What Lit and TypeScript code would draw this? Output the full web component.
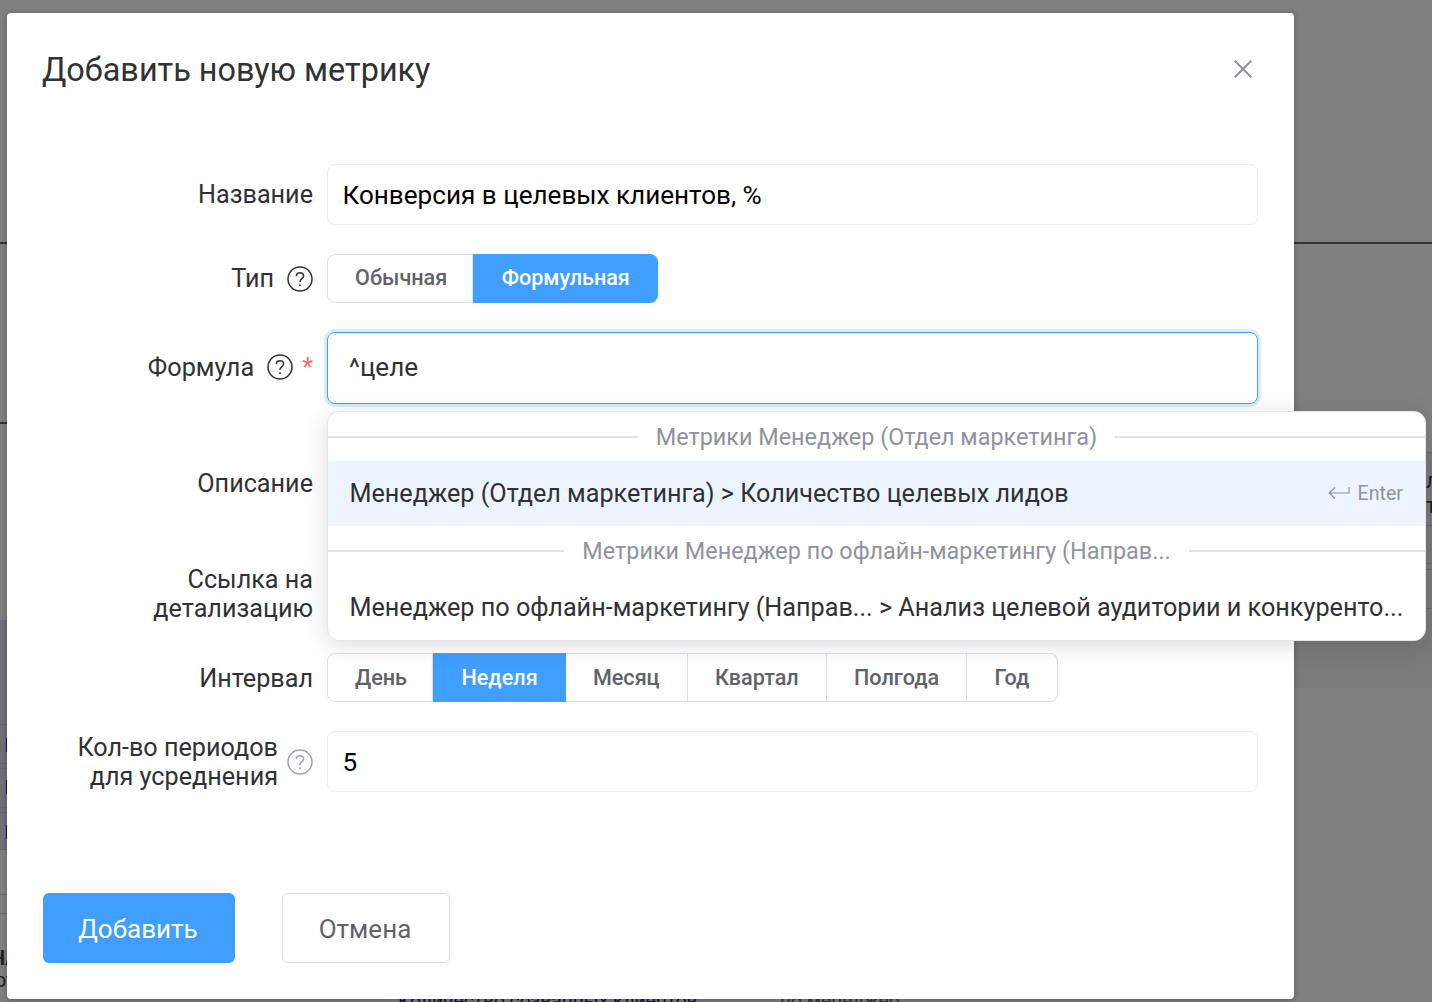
import { LitElement, html, css } from 'lit';
import { customElement } from 'lit/decorators.js';

const helpIcon = (cls = '') => html`
  <svg class="help ${cls}" viewBox="0 0 26 26" width="26" height="26" fill="none">
    <circle cx="13" cy="13" r="12" stroke="currentColor" stroke-width="1.5"></circle>
    <path d="M9.4 10.2c0-2.1 1.6-3.4 3.6-3.4s3.6 1.3 3.6 3.2c0 1.5-.9 2.2-1.9 2.9-1 .7-1.7 1.2-1.7 2.5v.6" stroke="currentColor" stroke-width="1.5"></path>
    <circle cx="13" cy="19.2" r="1" fill="currentColor"></circle>
  </svg>
`;

// faint rows of the page behind the backdrop, only their edges show
const leftRules = [724, 763, 768, 807, 812, 849, 894, 913];
const rightRules = [452, 525, 563, 569, 608];

@customElement('app-root')
export class AppRoot extends LitElement {
  static styles = css`
    :host {
      display: block;
      position: relative;
      height: 1002px;
      overflow: hidden;
      background: #808080;
      font-family: Roboto, 'Liberation Sans', sans-serif;
      color: #303133;
    }
    .bg {
      position: absolute;
    }
    .line-a {
      left: 0;
      right: 0;
      top: 242px;
      height: 2px;
      background: #333;
    }
    .line-b {
      left: 0;
      width: 8px;
      top: 422px;
      height: 2px;
      background: #333;
    }
    .band-left {
      left: 0;
      width: 8px;
      top: 620px;
      height: 229px;
      background: #707278;
    }
    .band-right {
      left: 1290px;
      right: 0;
      top: 452px;
      height: 236px;
      background: #7a7a7b;
    }
    .rule {
      height: 1px;
      background: #696a6e;
    }
    .rule.left {
      left: 0;
      width: 8px;
    }
    .rule.right {
      left: 1290px;
      right: 0;
    }
    .mark {
      left: 6px;
      width: 2px;
      height: 14px;
      background: #0a0a8c;
    }
    .mark-1 {
      top: 738px;
    }
    .mark-2 {
      top: 780px;
    }
    .mark-3 {
      top: 825px;
    }
    .bottom-text {
      top: 989px;
      font-size: 19.2px;
      line-height: 24px;
      white-space: nowrap;
    }
    .bottom-a {
      left: 398px;
      color: #0a0a70;
    }
    .bottom-b {
      left: 780px;
      color: #333;
    }
    .edge {
      font-size: 20px;
      line-height: 20px;
      color: #222;
      white-space: nowrap;
    }
    .edge-a {
      left: -9px;
      top: 948px;
      font-weight: 700;
    }
    .edge-b {
      left: -5px;
      top: 970px;
    }
    .edge-c {
      left: 1426px;
      top: 471px;
      font-size: 22px;
    }
    .edge-d {
      left: 1426px;
      top: 496px;
      font-size: 22px;
    }
    .modal {
      position: relative;
      box-sizing: border-box;
      width: 1287px;
      height: 986px;
      margin-left: 7px;
      top: 13px;
      background: #fff;
      border-radius: 4px;
      box-shadow: 0 1px 6px rgba(0, 0, 0, 0.3);
    }
    .head {
      display: flex;
      justify-content: space-between;
      align-items: flex-start;
      height: 151px;
      box-sizing: border-box;
      padding: 36px 42px 0 35px;
    }
    h1 {
      margin: 0;
      font-size: 32.4px;
      line-height: 42px;
      font-weight: 400;
      color: #303133;
    }
    .close {
      margin-top: 11px;
      color: #909399;
    }
    .form {
      display: flex;
      flex-direction: column;
      gap: 29px;
    }
    .row {
      display: grid;
      grid-template-columns: 306px 931px;
      column-gap: 14px;
    }
    .label {
      display: flex;
      justify-content: flex-end;
      align-items: center;
      gap: 13px;
      font-size: 25.2px;
      line-height: 29px;
      text-align: right;
      color: #303133;
    }
    .label.tight {
      gap: 9px;
    }
    .label.top {
      align-items: flex-start;
      padding-top: 36px;
    }
    .label.lift {
      padding-bottom: 2px;
    }
    .label.drop {
      padding-top: 2px;
    }
    .help {
      flex: none;
      color: #303133;
    }
    .help.muted {
      color: #9aa7ad;
    }
    .star {
      color: #f56c6c;
      margin-left: -4px;
    }
    .input {
      box-sizing: border-box;
      display: flex;
      align-items: center;
      height: 61px;
      padding: 0 14.5px;
      border: 1px solid #ebeef5;
      border-radius: 8px;
      font-size: 26.1px;
      color: #000;
    }
    .area {
      height: 101px;
    }
    .field {
      position: relative;
    }
    .input.focus {
      height: 72px;
      padding: 0 0 2px 21px;
      border: 1px solid #409eff;
      box-shadow: 0 0 0 3px #d9ebff;
      color: #303133;
    }
    .seg {
      display: inline-flex;
      height: 49px;
      vertical-align: top;
    }
    .seg span {
      box-sizing: border-box;
      display: flex;
      align-items: center;
      padding: 0 27.3px 0 27px;
      border: 1px solid #dcdfe6;
      border-left: 0;
      font-size: 21.6px;
      font-weight: 500;
      color: #606266;
    }
    .seg span:first-child {
      padding: 0 25px 0 27px;
      border-left: 1px solid #dcdfe6;
      border-radius: 8px 0 0 8px;
    }
    .seg span:last-child {
      border-radius: 0 8px 8px 0;
    }
    .seg span.on {
      padding-left: 28.5px;
      background: #409eff;
      border-color: #409eff;
      color: #fff;
    }
    .seg.up span {
      padding-bottom: 2px;
    }
    .menu {
      position: absolute;
      top: 79px;
      left: 0;
      width: 1099px;
      box-sizing: border-box;
      border: 1px solid #e4e7ed;
      border-radius: 12px;
      background: #fff;
      box-shadow: 0 4px 24px rgba(0, 0, 0, 0.14);
      overflow: hidden;
      z-index: 2;
    }
    .group {
      box-sizing: border-box;
      display: flex;
      align-items: center;
      gap: 18px;
      height: 50px;
      font-size: 23.4px;
      color: #909399;
      white-space: nowrap;
    }
    .group.first {
      height: 49px;
      padding-top: 1px;
    }
    .group::before,
    .group::after {
      content: '';
      flex: 1;
      height: 2px;
      background: #e0e2e8;
    }
    .item {
      box-sizing: border-box;
      display: flex;
      justify-content: space-between;
      align-items: center;
      height: 65px;
      padding: 0 22px 1px 21.5px;
      font-size: 25.2px;
      color: #303133;
      white-space: nowrap;
    }
    .item.last {
      height: 64px;
    }
    .item.active {
      background: #ecf5ff;
    }
    .enter {
      display: flex;
      align-items: center;
      gap: 8px;
      font-size: 19.6px;
      color: #909399;
    }
    .foot {
      display: flex;
      gap: 47px;
      margin-top: 101px;
      padding-left: 36px;
    }
    .btn {
      box-sizing: border-box;
      display: flex;
      justify-content: center;
      align-items: center;
      height: 70px;
      padding: 2px 2px 0 0;
      border-radius: 6px;
      font-size: 26px;
    }
    .btn.primary {
      width: 192px;
      background: #409eff;
      color: #fff;
    }
    .btn.plain {
      width: 168px;
      border: 1px solid #dcdfe6;
      color: #606266;
    }
  `;

  render() {
    return html`
      <div class="bg line-a"></div>
      <div class="bg line-b"></div>
      <div class="bg band-left"></div>
      <div class="bg band-right"></div>
      ${leftRules.map((y) => html`<div class="bg rule left" style="top: ${y}px"></div>`)}
      ${rightRules.map((y) => html`<div class="bg rule right" style="top: ${y}px"></div>`)}
      <div class="bg mark mark-1"></div>
      <div class="bg mark mark-2"></div>
      <div class="bg mark mark-3"></div>
      <div class="bg edge edge-a">НА</div>
      <div class="bg edge edge-b">ру</div>
      <div class="bg edge edge-c">л</div>
      <div class="bg edge edge-d">т</div>
      <div class="bg bottom-text bottom-a">Количество созванных клиентов</div>
      <div class="bg bottom-text bottom-b">по менеджер</div>

      <div class="modal">
        <div class="head">
          <h1>Добавить новую метрику</h1>
          <svg class="close" width="18" height="18" viewBox="0 0 18 18" fill="none" stroke="currentColor" stroke-width="2">
            <path d="M.7.7l16.6 16.6M17.3.7L.7 17.3"></path>
          </svg>
        </div>

        <div class="form">
          <div class="row">
            <div class="label">Название</div>
            <div class="input">Конверсия в целевых клиентов, %</div>
          </div>
          <div class="row">
            <div class="label">Тип ${helpIcon()}</div>
            <div>
              <div class="seg up">
                <span>Обычная</span>
                <span class="on">Формульная</span>
              </div>
            </div>
          </div>
          <div class="row">
            <div class="label lift">Формула ${helpIcon()} <span class="star">*</span></div>
            <div class="field">
              <div class="input focus">^целе</div>
              <div class="menu">
                <div class="group first">Метрики Менеджер (Отдел маркетинга)</div>
                <div class="item active">
                  <span>Менеджер (Отдел маркетинга) &gt; Количество целевых лидов</span>
                  <span class="enter">
                    <svg width="22" height="14" viewBox="0 0 22 14" fill="none" stroke="currentColor" stroke-width="1.2">
                      <path d="M21 1v6H1.5M7 1.5L1.2 7 7 12.5"></path>
                    </svg>
                    Enter
                  </span>
                </div>
                <div class="group">Метрики Менеджер по офлайн-маркетингу (Направ...</div>
                <div class="item last">
                  <span>Менеджер по офлайн-маркетингу (Направ... &gt; Анализ целевой аудитории и конкуренто...</span>
                </div>
              </div>
            </div>
          </div>
          <div class="row">
            <div class="label top">Описание</div>
            <div class="input area"></div>
          </div>
          <div class="row">
            <div class="label">Ссылка на<br />детализацию</div>
            <div class="input"></div>
          </div>
          <div class="row">
            <div class="label drop">Интервал</div>
            <div>
              <div class="seg">
                <span>День</span>
                <span class="on">Неделя</span>
                <span>Месяц</span>
                <span>Квартал</span>
                <span>Полгода</span>
                <span>Год</span>
              </div>
            </div>
          </div>
          <div class="row">
            <div class="label tight"><span>Кол-во периодов<br />для усреднения</span> ${helpIcon('muted')}</div>
            <div class="input">5</div>
          </div>
        </div>

        <div class="foot">
          <div class="btn primary">Добавить</div>
          <div class="btn plain">Отмена</div>
        </div>
      </div>
    `;
  }
}
